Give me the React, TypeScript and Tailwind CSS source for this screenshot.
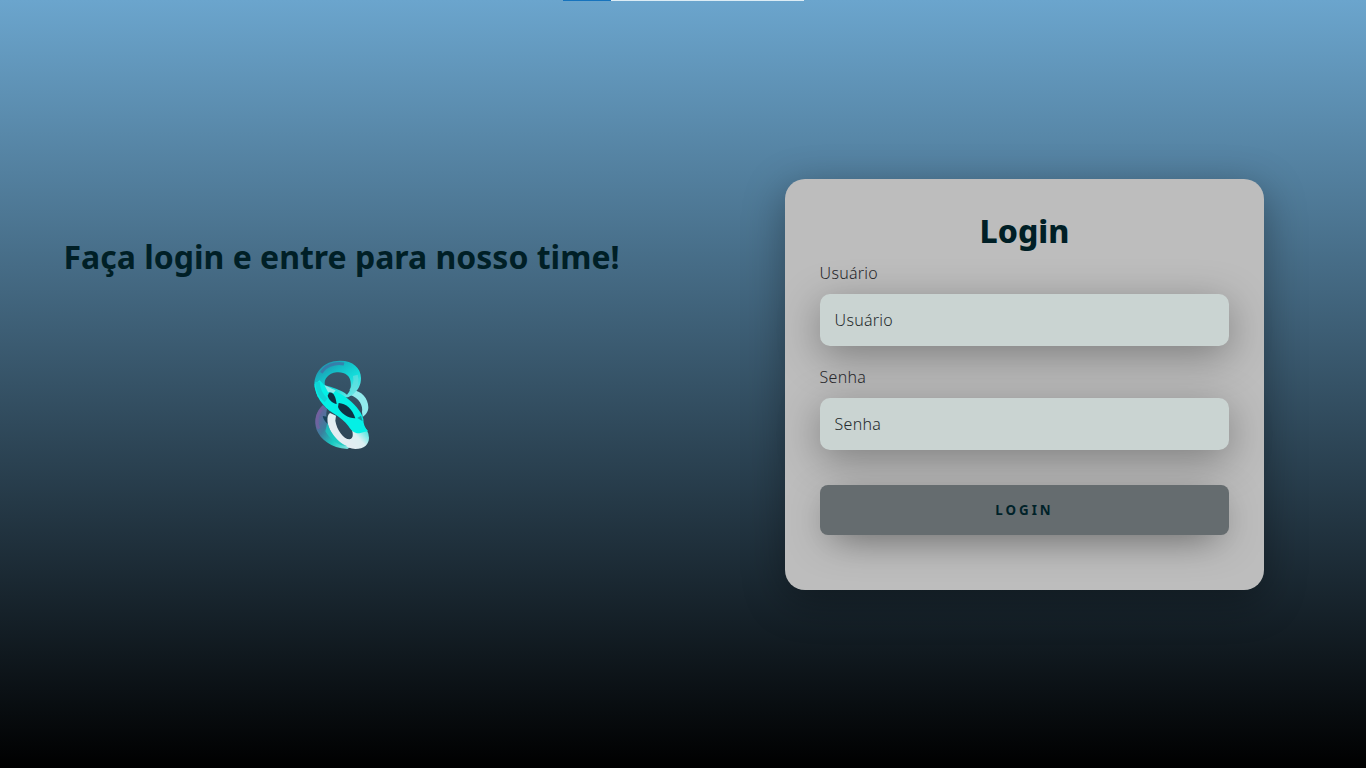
type FieldProps = { id: string; label: string; type: string };

function Field({ id, label, type }: FieldProps) {
  return (
    <div className="flex w-full flex-col">
      <label htmlFor={id} className="-ml-[0.4px] mb-[10px] h-[22px] text-base font-light leading-[22px] tracking-[0.25px] text-[#28282c]">
        {label}
      </label>
      <input
        id={id}
        type={type}
        placeholder={label}
        className="h-[52px] w-full rounded-[10px] bg-[#cad4d2] px-[14.6px] text-base font-light tracking-[0.25px] text-[#333] shadow-[0_10px_40px_#00000056] outline-none placeholder:text-[#252b2d] placeholder:opacity-100"
      />
    </div>
  );
}

function Knot() {
  return (
    <svg width="90" height="110" viewBox="0 0 270 330" fill="none" aria-hidden="true">
      <defs>
        <linearGradient id="top" x1="75" y1="35" x2="150" y2="150" gradientUnits="userSpaceOnUse">
          <stop stopColor="#2390ad" />
          <stop offset=".3" stopColor="#14bdc6" />
          <stop offset=".6" stopColor="#14dcda" />
          <stop offset="1" stopColor="#7ce6e8" />
        </linearGradient>
        <linearGradient id="low" x1="45" y1="200" x2="190" y2="290" gradientUnits="userSpaceOnUse">
          <stop stopColor="#6c619c" />
          <stop offset=".25" stopColor="#3b7f9d" />
          <stop offset=".5" stopColor="#19cac2" />
          <stop offset="1" stopColor="#d5f1f1" />
        </linearGradient>
        <linearGradient id="white" x1="140" y1="275" x2="196" y2="225" gradientUnits="userSpaceOnUse">
          <stop stopColor="#e3edf2" />
          <stop offset=".45" stopColor="#dceff2" />
          <stop offset="1" stopColor="#2ce6de" />
        </linearGradient>
        <filter id="soft" x="-10%" y="-10%" width="120%" height="120%" colorInterpolationFilters="sRGB">
          <feGaussianBlur stdDeviation="1.8" />
        </filter>
      </defs>
      <g filter="url(#soft)">
        <path d="M156 121 C184 121 205 146 205 172 C205 185 198 194 188 201 L186 186 C190 167 178 144 150 134 Z" fill="#92ebed" />
        <path d="M69 165 C47 184 41 211 50 240 C61 267 93 294 142 297 L160 286 C113 274 90 244 82 214 C77 200 79 186 81 177 Z" fill="url(#low)" />
        <path d="M63 179 C50 196 47 219 57 236" stroke="#76609f" strokeWidth="9" opacity=".7" />
        <path d="M68 198 L81 200 L83 222 C76 216 70 207 68 198 Z" fill="#18425a" />
        <path d="M90 189 C78 197 81 225 94 247 C110 274 139 296 166 297 C192 297 207 283 207 263 C206 247 199 235 188 226 L152 231 C160 247 162 266 149 268 C130 267 110 239 106 212 L108 197 Z" fill="url(#white)" />
        <path d="M82 219 C90 246 112 277 142 289 C116 288 90 269 76 244 Z" fill="#18c9c2" opacity=".75" />
        <path fillRule="evenodd" d="M43 110 C41 67 70 32 119 32 C157 31 183 53 183 84 C183 105 175 120 158 134 L144 142 L75 146 L53 140 Z M75 106 C70 88 85 70 110 67 C134 65 150 77 152 96 C154 112 151 123 141 134 C122 119 95 112 75 106 Z" fill="url(#top)" />
        <path d="M64 68 C76 48 103 36 132 42" stroke="#4667a2" strokeWidth="9" opacity=".65" />
        <path d="M166 76 C170 92 167 108 154 124" stroke="#68dedf" strokeWidth="15" opacity=".65" />
        <path d="M44 103 C44 137 69 171 100 190 C119 202 136 216 145 228 C155 243 164 251 178 250 L204 243 C194 233 190 222 190 207 C184 183 161 159 136 140 C114 126 94 119 76 109 L59 91 Z" fill="#04f0e6" />
        <path d="M52 96 C54 123 63 139 78 151" stroke="#10d4d6" strokeWidth="14" />
        <path d="M73 105 C83 110 94 115 107 121 L101 129 L84 126 Z" fill="#8fe8e9" />
        <path d="M87 128 C101 124 107 141 110 162 C98 160 86 149 83 137 Z" fill="#0f2f42" />
        <path d="M116 159 C138 161 157 176 166 205 C148 206 120 190 114 171 Z" fill="#0f3144" />
        <path d="M172 204 L183 197 L188 214 Z" fill="#139aa1" />
      </g>
    </svg>
  );
}

export default function App() {
  return (
    <main className="relative flex h-screen w-full overflow-hidden bg-[linear-gradient(to_bottom,#6ba5cd,#000)] font-['Noto_Sans',sans-serif]">
      <div className="absolute left-[563px] top-0 flex h-px w-[241px] bg-[#dcecf5]">
        <div className="w-12 bg-[#1673bd]" />
      </div>
      <section className="flex w-1/2 flex-col items-center pt-[235px]">
        <h1 className="whitespace-nowrap text-[32px] font-bold leading-[44px] text-[#001f26]">
          Faça login e entre para nosso time!
        </h1>
        <div className="ml-[7px] mt-[71px]">
          <Knot />
        </div>
      </section>
      <section className="flex w-1/2 items-center justify-center">
        <form className="flex h-[411px] w-[479px] flex-col items-center rounded-[20px] bg-[#bdbdbd] px-[35px] pt-[30px] shadow-[0_10px_40px_#00000056]">
          <h2 className="text-[32px] font-extrabold leading-[44px] text-[#001f26]">Login</h2>
          <div className="mt-[9px] flex w-full flex-col gap-5">
            <Field id="user" label="Usuário" type="text" />
            <Field id="password" label="Senha" type="password" />
          </div>
          <button
            type="button"
            className="mt-[35px] h-[50px] w-full rounded-lg bg-[#656c6f] pt-0.5 text-[13.333px] font-bold tracking-[3px] text-[#002229] shadow-[0_10px_40px_-12px_#000000b0]"
          >
            LOGIN
          </button>
        </form>
      </section>
    </main>
  );
}
